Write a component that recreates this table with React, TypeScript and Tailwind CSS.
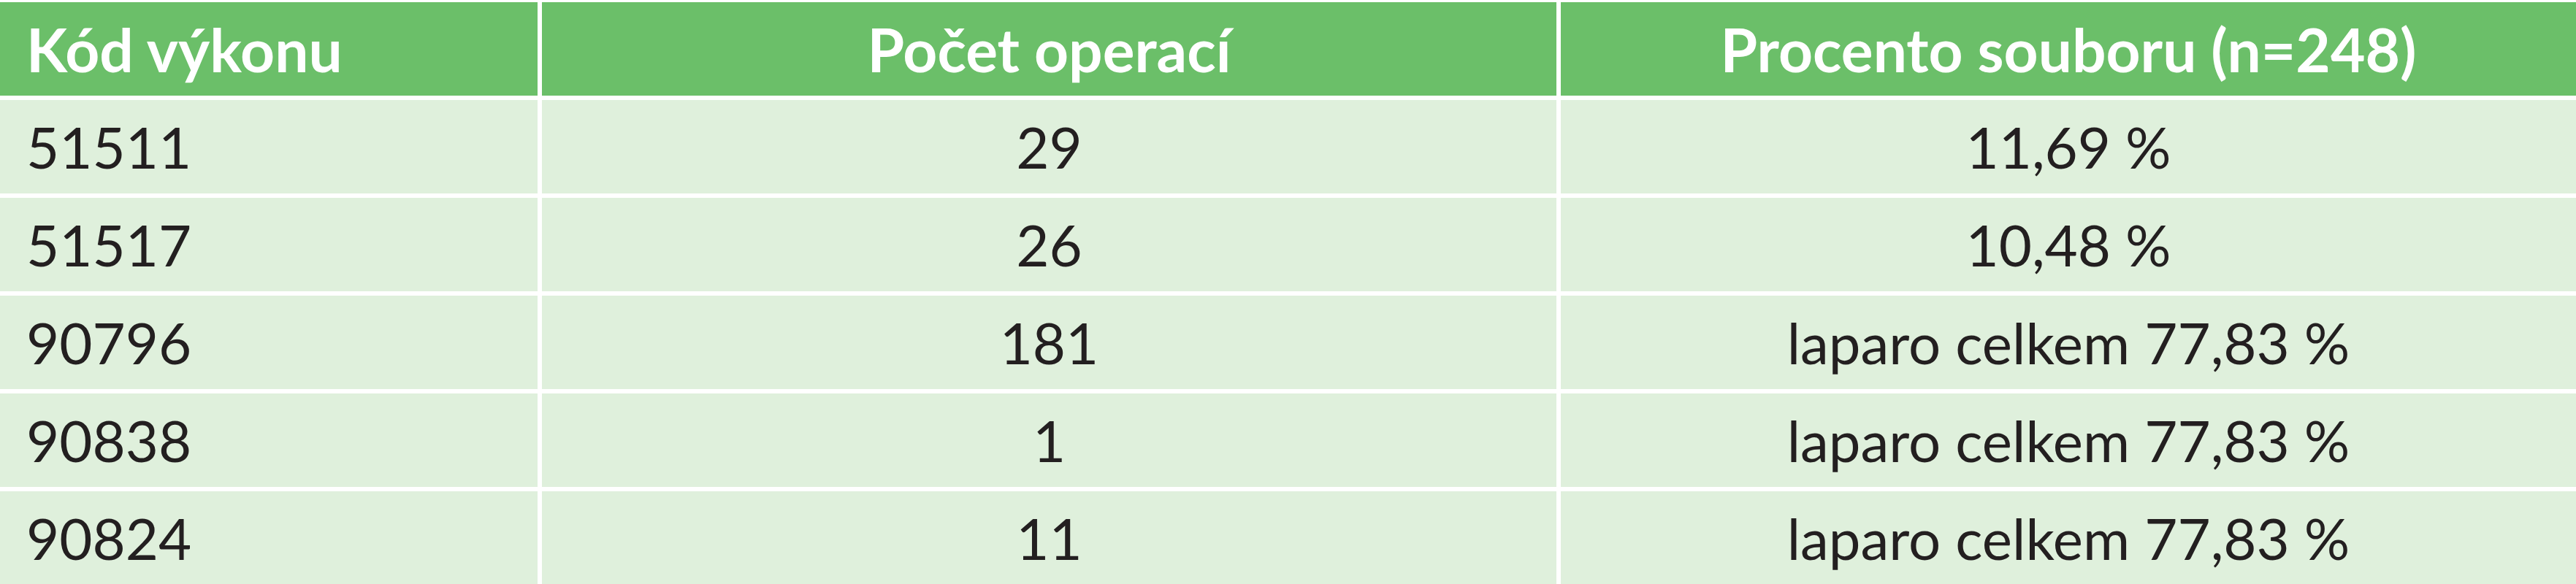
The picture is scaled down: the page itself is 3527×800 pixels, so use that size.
const rows = [
  { code: '51511', count: '29', pct: '11,69 %' },
  { code: '51517', count: '26', pct: '10,48 %' },
  { code: '90796', count: '181', pct: 'laparo celkem 77,83 %' },
  { code: '90838', count: '1', pct: 'laparo celkem 77,83 %' },
  { code: '90824', count: '11', pct: 'laparo celkem 77,83 %' },
]

export default function App() {
  return (
    <div className="h-[800px] w-[3527px] overflow-hidden bg-white pt-[3px] font-['Lato',sans-serif]">
      <div className="grid grid-cols-[736px_1389px_1fr] gap-[6px]">
        {/* Header */}
        <div className="flex h-[128px] items-center bg-[#6bbf69] pl-[36px] text-[82px] font-bold text-white">
          Kód výkonu
        </div>
        <div className="flex h-[128px] items-center justify-center bg-[#6bbf69] text-[82px] font-bold text-white">
          Počet operací
        </div>
        <div className="flex h-[128px] items-center justify-center bg-[#6bbf69] text-[82px] font-bold text-white">
          Procento souboru (n=248)
        </div>

        {rows.map((r, i) => (
          <div key={i} className="contents">
            <div className="flex h-[128px] items-center bg-[#dff0dc] pl-[36px] text-[78px] text-[#231f20]">
              {r.code}
            </div>
            <div className="flex h-[128px] items-center justify-center bg-[#dff0dc] text-[78px] text-[#231f20]">
              {r.count}
            </div>
            <div className="flex h-[128px] items-center justify-center bg-[#dff0dc] text-[78px] text-[#231f20]">
              {r.pct}
            </div>
          </div>
        ))}
      </div>
    </div>
  )
}
